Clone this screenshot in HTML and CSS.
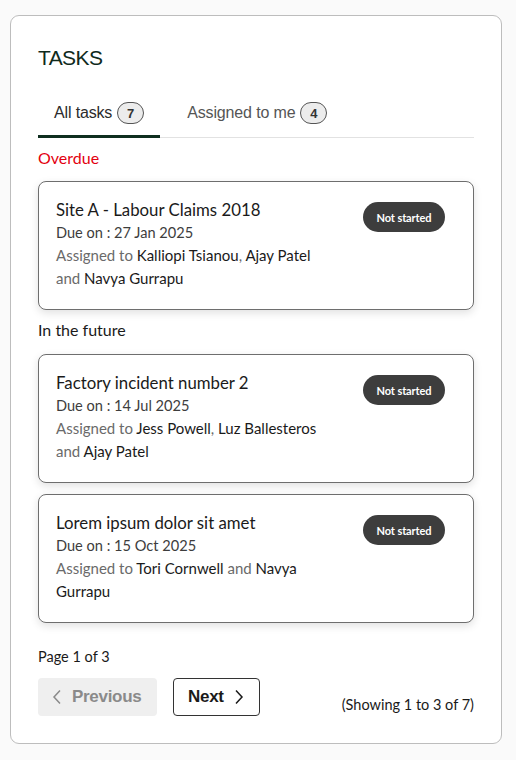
FILE: index.html
```html
<!DOCTYPE html>
<html>
<head>
<meta charset="utf-8">
<link rel="stylesheet" href="styles.css">
</head>
<body>
<div class="panel">
  <h1 class="title">TASKS</h1>
  <div class="tabs">
    <div class="tab active">All tasks <span class="count">7</span></div>
    <div class="tab">Assigned to me <span class="count">4</span></div>
  </div>
  <div class="group-label overdue">Overdue</div>
  <div class="task">
    <div class="task-body">
      <div class="task-name">Site A - Labour Claims 2018</div>
      <div class="task-due">Due on : 27 Jan 2025</div>
      <div class="task-assigned">Assigned to <span class="who">Kalliopi Tsianou</span>, <span class="who">Ajay Patel</span> and <span class="who">Navya Gurrapu</span></div>
    </div>
    <span class="status">Not started</span>
  </div>
  <div class="group-label future">In the future</div>
  <div class="task">
    <div class="task-body">
      <div class="task-name">Factory incident number 2</div>
      <div class="task-due">Due on : 14 Jul 2025</div>
      <div class="task-assigned">Assigned to <span class="who">Jess Powell</span>, <span class="who">Luz Ballesteros</span> and <span class="who">Ajay Patel</span></div>
    </div>
    <span class="status">Not started</span>
  </div>
  <div class="task second">
    <div class="task-body">
      <div class="task-name">Lorem ipsum dolor sit amet</div>
      <div class="task-due">Due on : 15 Oct 2025</div>
      <div class="task-assigned">Assigned to <span class="who">Tori Cornwell</span> and <span class="who">Navya Gurrapu</span></div>
    </div>
    <span class="status">Not started</span>
  </div>
  <div class="page-info">Page 1 of 3</div>
  <div class="pager">
    <button class="btn prev" disabled>
      <svg width="10" height="16" viewBox="0 0 10 16"><path d="M8 1.5 L2 8 L8 14.5" fill="none" stroke="currentColor" stroke-width="1.5"/></svg>
      Previous
    </button>
    <button class="btn next">
      Next
      <svg width="10" height="16" viewBox="0 0 10 16"><path d="M2 1.5 L8 8 L2 14.5" fill="none" stroke="currentColor" stroke-width="1.5"/></svg>
    </button>
    <div class="showing">(Showing 1 to 3 of 7)</div>
  </div>
</div>
</body>
</html>
```
FILE: styles.css
```css
html, body {
  margin: 0;
  padding: 0;
  background: #fafafa;
}
body {
  padding: 15px 15px 16px 10px;
  font-family: Lato, "Noto Sans", sans-serif;
  color: #1a1a1a;
}
.panel {
  background: #ffffff;
  border: 1px solid #bdbdbd;
  border-radius: 9px;
  padding: 27px 27px 27px 27px;
  width: 436px;
}
.title {
  margin: 2px 0 0 0;
  font-family: "Liberation Sans", Arial, sans-serif;
  font-weight: 400;
  font-size: 21px;
  letter-spacing: -0.6px;
  line-height: 26px;
  color: #0f2a1c;
}
.tabs {
  margin-top: 25px;
  display: flex;
  gap: 11px;
  border-bottom: 1px solid #e2e2e2;
}
.tab {
  display: flex;
  align-items: center;
  gap: 5px;
  padding: 6px 16px 11px 16px;
  font-family: "Liberation Sans", Arial, sans-serif;
  font-size: 16px;
  letter-spacing: -0.15px;
  color: #555;
  margin-bottom: -1px;
  border-bottom: 3px solid transparent;
}
.tab.active {
  color: #2b2b2b;
  border-bottom-color: #0f2e1f;
}
.count {
  display: inline-flex;
  align-items: center;
  justify-content: center;
  box-sizing: border-box;
  min-width: 27px;
  height: 22px;
  border: 1px solid #555;
  border-radius: 11px;
  background: #ececec;
  font-size: 13px;
  font-weight: 700;
  color: #333;
  letter-spacing: 0;
}
.group-label {
  margin-top: 10px;
  font-size: 16px;
  line-height: 20px;
  color: #1a1a1a;
}
.group-label.overdue {
  color: #e3000f;
}
.group-label.future {
  margin-top: 10px;
}
.task {
  margin-top: 13px;
  display: flex;
  align-items: flex-start;
  gap: 30px;
  border: 1px solid #6e6e6e;
  border-radius: 8px;
  padding: 16px 28px 19px 17px;
  box-shadow: 0 3px 8px rgba(0,0,0,0.12);
  background: #fff;
}
.group-label.future + .task {
  margin-top: 14px;
}
.task.second {
  margin-top: 11px;
}
.task-body {
  flex: 1;
  font-size: 15px;
  line-height: 23px;
}
.task-name {
  font-size: 16.8px;
  color: #1a1a1a;
}
.task-due {
  color: #3d3d3d;
  font-size: 14.6px;
}
.task-assigned {
  color: #6a6a6a;
}
.who {
  color: #1a1a1a;
}
.status {
  margin-top: 4px;
  flex: none;
  width: 82px;
  height: 30px;
  border-radius: 15px;
  background: #3d3d3d;
  color: #fff;
  font-size: 11px;
  font-weight: 700;
  letter-spacing: -0.1px;
  display: flex;
  align-items: center;
  justify-content: center;
}
.page-info {
  margin-top: 25px;
  font-size: 14.5px;
  line-height: 18px;
  color: #1a1a1a;
}
.pager {
  margin-top: 12px;
  display: flex;
  align-items: flex-end;
  gap: 16px;
}
.btn {
  height: 38px;
  display: flex;
  align-items: center;
  gap: 10px;
  font-family: "Liberation Sans", Arial, sans-serif;
  font-size: 17px;
  font-weight: 700;
  letter-spacing: -0.3px;
  border-radius: 4px;
  padding: 0 14px;
}
.btn.prev {
  width: 119px;
  background: #efefef;
  border: none;
  color: #8a8a8a;
}
.btn.next {
  width: 87px;
  background: #fff;
  border: 1px solid #333;
  color: #1a1a1a;
  padding: 0 12px 0 14px;
}
.showing {
  margin-left: auto;
  font-size: 14.5px;
  line-height: 18px;
  color: #1a1a1a;
  padding-bottom: 2px;
}
```
